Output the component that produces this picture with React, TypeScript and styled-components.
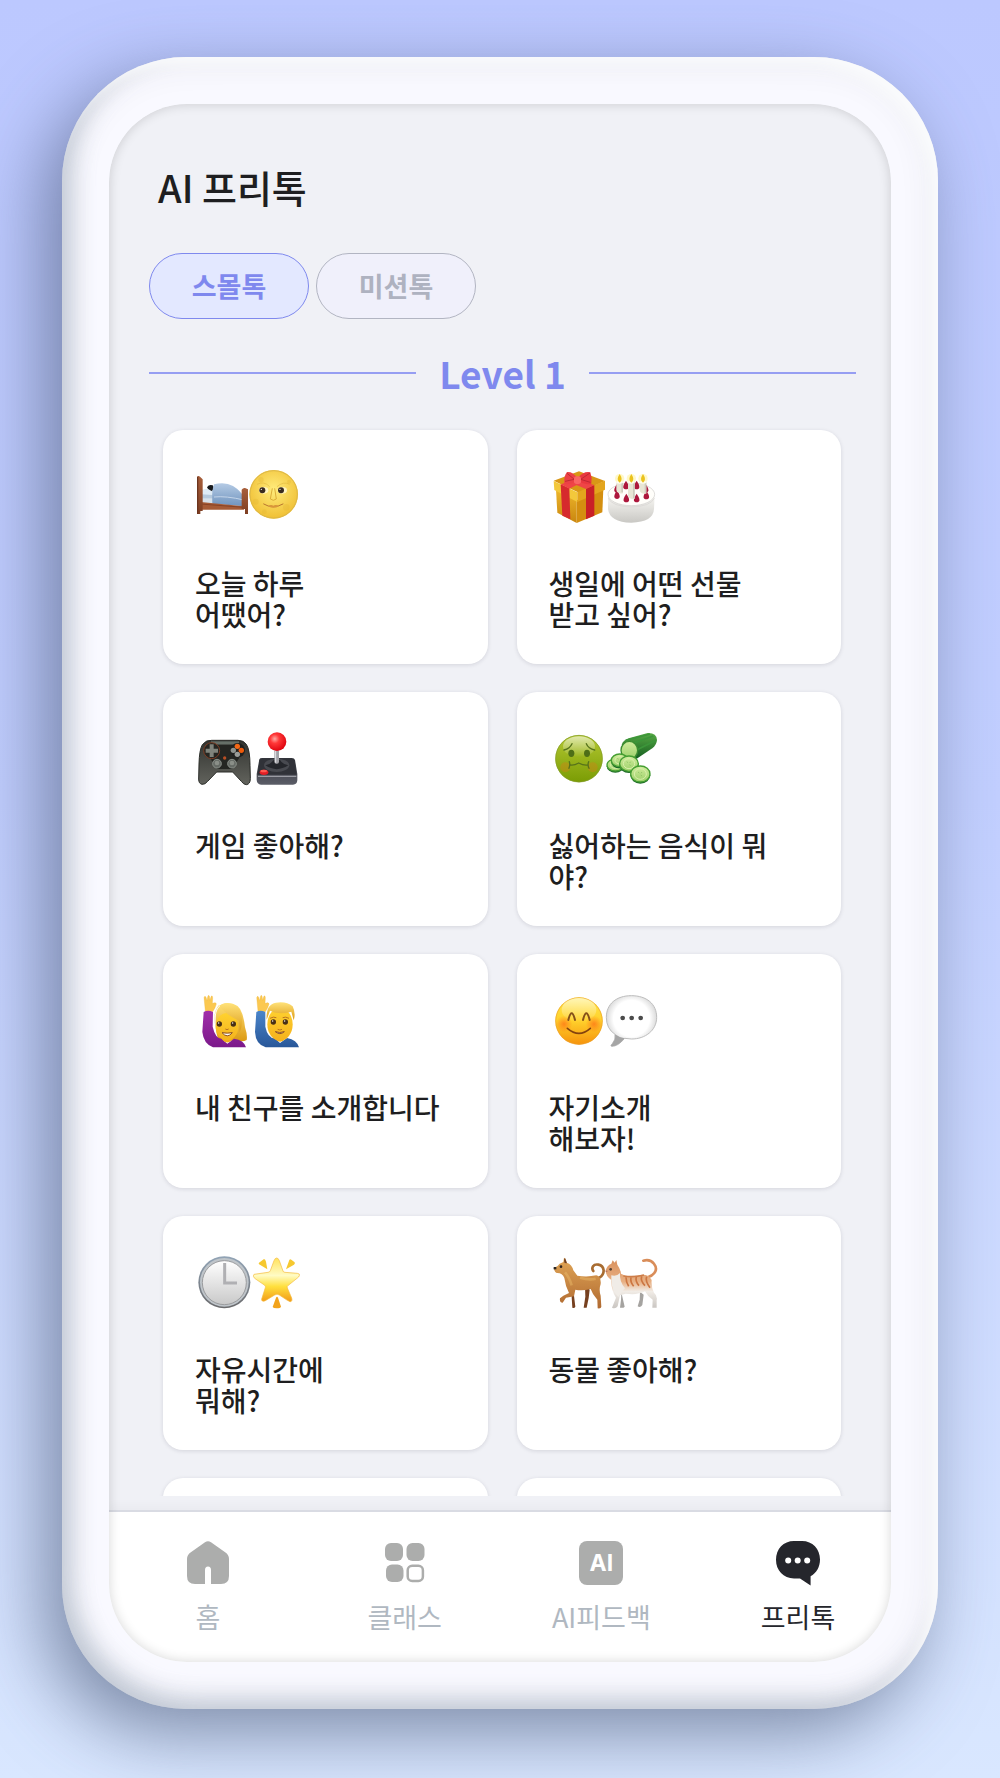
import React, { useState } from "react";
import type { ReactNode } from "react";
import styled, { createGlobalStyle } from "styled-components";

const GlobalStyle = createGlobalStyle`
  *, *::before, *::after { box-sizing: border-box; }
  body {
    margin: 0;
    font-family: "Noto Sans CJK KR", "Noto Sans", sans-serif;
    color: #1e1e20;
  }
  button { font-family: inherit; cursor: pointer; }
`;

const Page = styled.div`
  display: flex;
  height: 100vh;
  padding: 57px 62px 69px;
  background: linear-gradient(180deg, #bcc8ff 0%, #c2cfff 45%, #d9e7ff 100%);
  overflow: hidden;
`;

const Phone = styled.div`
  display: flex;
  flex: 1;
  min-width: 0;
  padding: 47px;
  border-radius: 124px;
  background: #f9f9ff;
  box-shadow:
    inset -10px 10px 12px #f9fafc,
    inset 10px -10px 22px rgba(150, 165, 182, 0.48),
    inset 0 0 36px rgba(60, 65, 80, 0.13),
    -18px 24px 72px rgba(70, 84, 115, 0.62);
`;

const Screen = styled.div`
  position: relative;
  display: flex;
  flex: 1;
  flex-direction: column;
  min-width: 0;
  border-radius: 78px;
  background: #f0f1f6;
  overflow: hidden;

  &::after {
    content: "";
    position: absolute;
    inset: 0;
    border-radius: inherit;
    box-shadow: inset 0 0 12px rgba(0, 0, 0, 0.16);
    pointer-events: none;
  }
`;

const Main = styled.main`
  display: flex;
  flex: 1;
  flex-direction: column;
  min-height: 0;
  padding: 59px 35px 14px 40px;
`;

const Title = styled.h1`
  margin: 0 0 42px;
  padding-left: 9px;
  font-size: 38px;
  font-weight: 500;
  line-height: 48px;
`;

const Tabs = styled.div`
  display: flex;
  gap: 7px;
`;

const Tab = styled.button<{ $active: boolean }>`
  width: 160px;
  height: 66px;
  padding: 0;
  border: 1px solid ${(p) => (p.$active ? "#7f89ee" : "#b2b5c2")};
  border-radius: 33px;
  background: ${(p) => (p.$active ? "#e3e8ff" : "#f0f0fb")};
  color: ${(p) => (p.$active ? "#7f88ee" : "#aeb2c0")};
  font-size: 27px;
  font-weight: 700;
  line-height: 32px;
`;

const LevelHeading = styled.h2`
  display: flex;
  align-items: center;
  gap: 23px;
  margin: 32px 0 0;
  color: #7f89ee;
  font-size: 37px;
  font-weight: 700;
  line-height: 44px;

  &::before,
  &::after {
    content: "";
    flex: 1;
    height: 2px;
    background: #969ef2;
  }
`;

const TopicGrid = styled.div`
  display: grid;
  flex: 1;
  grid-template-columns: 1fr 1fr;
  grid-auto-rows: 234px;
  align-content: start;
  gap: 28px 29px;
  min-height: 0;
  padding: 35px 15px 0 14px;
  overflow: hidden;
`;

const Card = styled.button`
  display: flex;
  flex-direction: column;
  align-items: flex-start;
  gap: 46px;
  padding: 40px 32px 0;
  border: 0;
  border-radius: 20px;
  background: #fff;
  box-shadow: 0 1px 4px rgba(20, 20, 50, 0.13);
  color: inherit;
  text-align: left;
`;

const CardText = styled.span`
  font-size: 28px;
  font-weight: 500;
  line-height: 31px;
  white-space: pre-line;
`;

const Picture = styled.svg`
  display: block;
  width: 104px;
  height: 52px;
  margin-left: 3px;
  overflow: visible;
`;

const BottomNav = styled.nav`
  display: flex;
  justify-content: space-between;
  height: 152px;
  padding: 29px 43px 0 49px;
  border-top: 2px solid #d9dbe3;
  background: #fff;
  box-shadow: 0 -6px 8px rgba(20, 20, 40, 0.025);
`;

const NavLink = styled.a<{ $active?: boolean }>`
  display: flex;
  flex-direction: column;
  align-items: center;
  gap: 16px;
  width: 100px;
  color: ${(p) => (p.$active ? "#25262c" : "#b0b8c1")};
  font-size: 27px;
  line-height: 32px;
  white-space: nowrap;
  text-decoration: none;
`;

const NavIcon = styled.svg`
  display: block;
  width: 44px;
  height: 44px;
  overflow: visible;
`;

const AiBadge = styled.span`
  width: 44px;
  height: 44px;
  border-radius: 8px;
  background: #acadac;
  color: #fff;
  font-family: Inter, sans-serif;
  font-size: 23px;
  font-weight: 700;
  line-height: 44px;
  text-align: center;
`;

function Shade({ id, from, to, radial }: { id: string; from: string; to: string; radial?: boolean }) {
  const stops = (
    <>
      <stop offset="0" stopColor={from} />
      <stop offset="1" stopColor={to} />
    </>
  );
  return radial ? (
    <radialGradient id={id} cx="50%" cy="40%" r="60%">{stops}</radialGradient>
  ) : (
    <linearGradient id={id} x1="0" y1="0" x2="0" y2="1">{stops}</linearGradient>
  );
}

const Gloss = ({ id }: { id: string }) => (
  <linearGradient id={id} x1="0" y1="0" x2="0" y2="1">
    <stop offset="0" stopColor="#fff" stopOpacity="0.6" />
    <stop offset="1" stopColor="#fff" stopOpacity="0" />
  </linearGradient>
);

const BedAndMoon = () => (
  <Picture viewBox="147 147 312 156" aria-hidden="true">
    <defs>
      <Shade id="quilt" from="#b5cbe5" to="#6f93bd" />
      <Shade id="wood" from="#a85f3b" to="#7d3e22" />
      <Shade id="moon" from="#ffec7c" to="#f0bf33" radial />
    </defs>
    <path d="M155 210 L178 203 L200 212 V250 H155Z" fill="#b6c9dc" />
    <path d="M155 232 H200 V252 H155Z" fill="#d7e1ea" />
    <path d="M174 199 Q180 189 191 193 L197 204 L184 212Q178 208 174 199Z" fill="#17191c" />
    <path d="M156 207 L176 203 L194 214 L190 222 L157 220Z" fill="#dfebf5" />
    <path d="M190 248 Q188 205 195 190 Q228 181 252 195 Q276 210 286 230 L286 256Z" fill="url(#quilt)" />
    <path d="M195 228 Q230 224 285 237" fill="none" stroke="#c4d5e9" strokeWidth="3" />
    <path d="M155 243 L285 256 V266 H155Z" fill="#a65b36" />
    <path d="M155 249 L285 259" stroke="#78371d" strokeWidth="2" />
    <path d="M144 168 Q148 163 153 167 L161 175 V270 H154 V279 H144Z" fill="url(#wood)" />
    <path d="M144 168 V279 H148 V166Z" fill="#6c351e" />
    <path d="M278 206 Q282 200 288 201 L297 205 V279 H288 V264 H278Z" fill="url(#wood)" />
    <circle cx="374" cy="220" r="73" fill="url(#moon)" />
    <circle cx="374" cy="220" r="71" fill="none" stroke="#dcb747" strokeWidth="3" />
    <g fill="#e2b432" opacity="0.3">
      <circle cx="336" cy="176" r="8" />
      <circle cx="320" cy="242" r="9" />
      <circle cx="412" cy="259" r="10" />
      <circle cx="420" cy="182" r="6" />
      <circle cx="346" cy="272" r="7" />
    </g>
    <ellipse cx="344" cy="208" rx="14" ry="10" fill="#fff4bf" />
    <ellipse cx="400" cy="208" rx="14" ry="10" fill="#fff4bf" />
    <circle cx="340" cy="208" r="9" fill="#392b20" />
    <circle cx="396" cy="208" r="9" fill="#392b20" />
    <circle cx="337" cy="205" r="2" fill="#fff" />
    <circle cx="393" cy="205" r="2" fill="#fff" />
    <path d="M324 190 Q345 179 362 197 M384 197 Q403 180 422 190" fill="none" stroke="#e3b93f" strokeWidth="2" />
    <path d="M370 202 L364 234 Q373 242 382 234 L377 202" fill="none" stroke="#dcae39" strokeWidth="3" />
    <path d="M344 249 Q372 266 402 249" fill="none" stroke="#b87630" strokeWidth="3" strokeLinecap="round" />
    <path d="M358 256 Q365 249 373 254 Q381 249 389 256 Q374 265 358 256" fill="#d9963a" />
  </Picture>
);

const GiftAndCake = () => (
  <Picture viewBox="126 147 312 156" aria-hidden="true">
    <defs>
      <Shade id="cake" from="#fbfaf6" to="#c9c8c4" />
      <Shade id="giftleft" from="#edb62b" to="#c9860f" />
    </defs>
    <path d="M131 179 L207 151 L285 180 L207 215Z" fill="#d99716" />
    <path d="M138 207 L200 238 V306 L142 275Z" fill="url(#giftleft)" />
    <path d="M200 238 L280 203 L277 274 L200 306Z" fill="#d48f10" />
    <path d="M131 180 L202 214 V243 L133 207Z" fill="#f3c83b" />
    <path d="M202 214 L285 179 V206 L202 243Z" fill="#e3a51d" />
    <path d="M152 190 L178 202 L181 295 L157 284Z" fill="#d62a2d" />
    <path d="M228 203 L253 192 V284 L228 295Z" fill="#c92027" />
    <path d="M152 190 L207 171 L228 178 L178 203Z M178 170 L253 192 L228 204 L170 180Z" fill="#ef4546" />
    <path d="M201 178 Q176 195 163 187 Q161 165 171 153 Q188 151 201 170Z" fill="#ec4146" />
    <path d="M205 170 Q220 150 241 154 Q247 171 244 188 Q224 194 205 180Z" fill="#e9383f" />
    <path d="M171 157 L193 175 L165 181 M240 156 L212 175 L241 184" stroke="#a9202b" fill="none" strokeWidth="2" />
    <rect x="192" y="166" width="21" height="23" rx="8" fill="#fa6665" />
    <path d="M294 220 V264 Q299 304 364 305 Q430 303 432 264 L434 220Z" fill="url(#cake)" />
    <ellipse cx="364" cy="220" rx="70" ry="34" fill="#fffefa" stroke="#d0cecb" strokeWidth="2" />
    <path d="M295 232 Q306 256 364 258 Q422 256 433 232" fill="none" stroke="#dddbd8" strokeWidth="3" />
    {[[321, 203], [348, 193], [380, 193], [407, 203], [321, 222], [349, 232], [380, 232], [409, 223]].map(([x, y]) => (
      <path key={`${x}-${y}`} d={`M${x} ${y - 14} Q${x + 13} ${y + 5} ${x + 6} ${y + 10} Q${x} ${y + 14} ${x - 6} ${y + 10} Q${x - 13} ${y + 5} ${x} ${y - 14}Z`} fill="#ad173c" />
    ))}
    {[[329, 206], [364, 223], [399, 207]].map(([x, y]) => (
      <g key={x}>
        <circle cx={x} cy="173" r="14" fill="#fff3a0" opacity="0.6" />
        <path d={`M${x - 10} 184 V${y} Q${x - 8} ${y + 13} ${x + 10} ${y + 11} V184Z`} fill="#e8e6d5" />
        <path d={`M${x + 5} 183 V${y + 8} H${x + 10} V184Z`} fill="#cccbbd" />
        <ellipse cx={x} cy="184" rx="10" ry="4" fill="#fffdf0" />
        <path d={`M${x} 159 Q${x + 12} 177 ${x} 185 Q${x - 12} 177 ${x} 159`} fill="#eac21d" />
      </g>
    ))}
  </Picture>
);

const PadAndJoystick = () => (
  <Picture viewBox="147 126 312 156" aria-hidden="true">
    <defs>
      <Shade id="pad" from="#31332f" to="#62635d" />
      <Shade id="base" from="#34363c" to="#5b5d67" />
      <radialGradient id="ball" cx="38%" cy="35%" r="70%">
        <stop offset="0" stopColor="#ffaaa3" />
        <stop offset="0.35" stopColor="#ff3838" />
        <stop offset="1" stopColor="#dc000c" />
      </radialGradient>
    </defs>
    <path d="M160 164 Q172 149 188 151 H267 Q284 151 292 163 Q303 180 303 226 L304 265 Q304 283 292 284 Q284 284 277 274 L251 246 H203 L176 274 Q168 284 159 283 Q149 281 149 267 L150 222 Q151 180 160 164Z" fill="url(#pad)" stroke="#292b27" strokeWidth="3" />
    <path d="M186 154 H270 V164 H186Z" fill="#667068" />
    <path d="M198 164 H256 L270 205 L250 237 H204 L185 207Z" fill="#242622" />
    <circle cx="188" cy="182" r="24" fill="#252622" stroke="#7d3d24" strokeWidth="3" />
    <circle cx="266" cy="181" r="22" fill="#20211f" />
    <path d="M182 163 h12 v13 h13 v12 h-13 v13 h-12 v-13 h-12 v-12 h12z" fill="#7f837b" />
    <circle cx="265" cy="169" r="8" fill="#f46816" />
    <circle cx="277" cy="181" r="8" fill="#ee5b0b" />
    <circle cx="253" cy="181" r="8" fill="#8f948f" />
    <circle cx="265" cy="193" r="8" fill="#9b9e9a" />
    <circle cx="204" cy="221" r="13" fill="#666b66" stroke="#8a9089" strokeWidth="3" />
    <circle cx="249" cy="221" r="13" fill="#666b66" stroke="#8a9089" strokeWidth="3" />
    <circle cx="204" cy="219" r="7" fill="#8a8f88" />
    <circle cx="249" cy="219" r="7" fill="#8a8f88" />
    <circle cx="227" cy="204" r="5" fill="#b74e24" />
    <path d="M331 208 Q333 203 342 204 H426 Q436 203 438 210 L445 252 V271 Q444 284 432 284 H336 Q324 283 323 270 V252Z" fill="url(#base)" />
    <path d="M325 254 L332 211 Q333 206 340 206 H428 Q436 206 437 212 L443 254Z" fill="#303238" />
    <path d="M327 259 H442" stroke="#9b9ca3" strokeWidth="4" />
    <ellipse cx="383" cy="226" rx="38" ry="20" fill="#484a50" />
    <path d="M373 211 Q364 224 349 226 Q383 249 418 226 Q399 222 393 210Z" fill="#24262b" />
    <rect x="376" y="178" width="14" height="43" rx="6" fill="#a2a2a7" />
    <path d="M380 182 V218" stroke="#e7e7ea" strokeWidth="3" />
    <circle cx="384" cy="155" r="28" fill="url(#ball)" />
    <ellipse cx="345" cy="247" rx="13" ry="8" fill="#e41f25" />
    <ellipse cx="344" cy="243" rx="10" ry="4" fill="#ff5a50" />
  </Picture>
);

const SickAndCucumber = () => (
  <Picture viewBox="126 126 312 156" aria-hidden="true">
    <defs>
      <Shade id="sick" from="#b4c832" to="#7a9c04" />
      <Gloss id="sickgloss" />
      <Shade id="peel" from="#57a944" to="#155f20" />
      <Shade id="flesh" from="#d2ec9d" to="#9bd069" />
    </defs>
    <circle cx="207" cy="206" r="71" fill="url(#sick)" />
    <circle cx="207" cy="206" r="70" fill="none" stroke="#849c2c" strokeWidth="2" />
    <ellipse cx="207" cy="170" rx="48" ry="31" fill="url(#sickgloss)" />
    <circle cx="166" cy="232" r="15" fill="#cc8617" opacity="0.45" />
    <circle cx="248" cy="232" r="15" fill="#cc8617" opacity="0.45" />
    <ellipse cx="184" cy="190" rx="9" ry="11" fill="#4e6e17" />
    <ellipse cx="231" cy="190" rx="9" ry="11" fill="#4e6e17" />
    <path d="M162 180 Q180 175 186 161 M229 161 Q235 176 254 180 M178 215 Q181 224 177 235 M181 225 Q192 227 206 219 Q221 227 233 225 M236 215 Q232 224 237 235" fill="none" stroke="#57731b" strokeWidth="4" strokeLinecap="round" />
    <path d="M335 164 Q340 151 356 145 L413 129 Q440 128 441 150 Q440 164 428 174 L379 207Z" fill="url(#peel)" />
    <path d="M347 151 L420 132 M369 160 L430 138 M380 180 L438 151" stroke="#3c963a" strokeWidth="5" />
    <ellipse cx="358" cy="181" rx="25" ry="27" fill="url(#flesh)" stroke="#3b8c30" strokeWidth="4" />
    {[[316, 225, 26, 19], [329, 211, 26, 20], [357, 221, 29, 24], [391, 252, 30, 25]].map(([x, y, rx, ry]) => (
      <g key={x}>
        <ellipse cx={x} cy={y + 4} rx={rx} ry={ry} fill="#1e6b28" />
        <ellipse cx={x} cy={y} rx={rx - 1} ry={ry - 1} fill="url(#flesh)" stroke="#459e32" strokeWidth="4" />
        <ellipse cx={x} cy={y} rx={rx - 12} ry={ry - 9} fill="none" stroke="#d9efaa" strokeWidth="3" />
        <path d={`M${x - 7} ${y - 6} l4 3 M${x + 5} ${y - 6} l-3 4 M${x + 5} ${y + 6} l-4 -3`} stroke="#82b75c" strokeWidth="2" />
      </g>
    ))}
  </Picture>
);

const Hand = ({ x }: { x: number }) => (
  <g transform={`translate(${x} 0)`} fill="#fbc850" stroke="#edb23a" strokeWidth="1">
    <path d="M169 184 L166 152 Q164 139 168 139 Q171 139 174 152 L176 141 Q178 133 181 138 L183 151 L186 140 Q190 134 191 143 L190 160 Q202 155 202 162 Q199 174 191 185Z" />
  </g>
);

const WavingFriends = () => (
  <Picture viewBox="147 132 312 156" aria-hidden="true">
    <defs>
      <Shade id="purple" from="#a12faa" to="#7b198a" />
      <Shade id="blue" from="#4b85ca" to="#285799" />
      <Shade id="skin" from="#ffd230" to="#f5b21c" />
      <Shade id="hair" from="#ffe27a" to="#dc9a12" />
    </defs>
    <Hand x={0} />
    <path d="M200 207 Q200 163 234 159 Q270 158 280 192 Q286 212 288 232 Q296 256 293 270 Q283 276 263 272 H210 Q198 249 200 207Z" fill="url(#hair)" />
    <path d="M164 186 Q177 178 192 186 L191 230 Q199 265 217 266 L235 281 L255 266 Q285 270 291 292 H192 Q164 282 160 246Z" fill="url(#purple)" />
    <path d="M220 254 H250 V268 Q236 286 220 269Z" fill="#f0a91d" />
    <ellipse cx="234" cy="230" rx="34" ry="41" fill="url(#skin)" />
    <path d="M197 222 Q193 182 210 165 Q226 192 270 212 L272 247 Q284 222 276 188 Q266 160 232 159 Q200 162 197 202Z" fill="url(#hair)" />
    <Hand x={158} />
    <path d="M322 186 Q334 178 349 186 L349 230 Q356 264 377 265 L393 279 L414 264 Q444 270 450 292 H350 Q320 283 318 246Z" fill="url(#blue)" />
    <path d="M378 253 H408 V266 Q394 285 378 266Z" fill="#eda91d" />
    <ellipse cx="393" cy="223" rx="38" ry="49" fill="url(#skin)" />
    <path d="M353 209 Q350 163 381 158 Q412 153 431 169 Q441 190 434 211 L427 185 Q390 196 363 182Z" fill="url(#hair)" />
    <g fill="#493016">
      <circle cx="211" cy="222" r="8" />
      <circle cx="253" cy="222" r="8" />
      <circle cx="373" cy="216" r="8" />
      <circle cx="409" cy="216" r="8" />
    </g>
    <g fill="#fff">
      <circle cx="209" cy="219" r="2" />
      <circle cx="251" cy="219" r="2" />
      <circle cx="371" cy="213" r="2" />
      <circle cx="407" cy="213" r="2" />
    </g>
    <path d="M219 248 Q234 251 250 248 Q235 267 219 248Z M379 245 Q392 250 406 245 Q393 257 379 245Z" fill="#fff" stroke="#8c5022" strokeWidth="3" />
    <path d="M229 237 Q234 241 239 237 M386 238 Q393 242 399 238 M363 205 Q373 199 382 203 M401 203 Q410 199 420 205" fill="none" stroke="#b97420" strokeWidth="3" />
  </Picture>
);

const SmileAndSpeech = () => (
  <Picture viewBox="126 132 312 156" aria-hidden="true">
    <defs>
      <linearGradient id="smile" x1="0" y1="0" x2="0" y2="1">
        <stop offset="0" stopColor="#ffe84a" />
        <stop offset="0.5" stopColor="#ffd02b" />
        <stop offset="1" stopColor="#f6930c" />
      </linearGradient>
      <Gloss id="smilegloss" />
      <radialGradient id="blush">
        <stop offset="0" stopColor="#ff6a14" stopOpacity="0.7" />
        <stop offset="1" stopColor="#ff6a14" stopOpacity="0" />
      </radialGradient>
      <radialGradient id="speech" cx="50%" cy="45%" r="55%">
        <stop offset="0.65" stopColor="#fff" />
        <stop offset="1" stopColor="#cfcfcf" />
      </radialGradient>
    </defs>
    <circle cx="207" cy="213" r="71" fill="url(#smile)" />
    <circle cx="207" cy="213" r="70" fill="none" stroke="#eba02c" strokeWidth="2" />
    <ellipse cx="207" cy="180" rx="52" ry="36" fill="url(#smilegloss)" />
    <circle cx="162" cy="222" r="25" fill="url(#blush)" />
    <circle cx="252" cy="222" r="25" fill="url(#blush)" />
    <path d="M175 210 Q185 170 195 210 M219 210 Q229 170 239 210" fill="none" stroke="#855019" strokeWidth="6" strokeLinecap="round" />
    <path d="M172 235 Q207 265 241 235" fill="none" stroke="#84420e" strokeWidth="5" strokeLinecap="round" />
    <path d="M364 137 C410 137 440 162 440 202 C440 242 405 267 365 267 L344 265 Q323 290 305 289 Q300 288 307 281 Q318 269 315 253 Q289 236 289 202 C289 162 319 137 364 137Z" fill="url(#speech)" stroke="#bdbdbd" strokeWidth="3" />
    <path d="M315 253 Q329 263 344 265 Q323 290 305 289 Q300 288 307 281 Q318 269 315 253Z" fill="#a5a5a5" />
    <circle cx="338" cy="204" r="7" fill="#4b4b4b" />
    <circle cx="365" cy="204" r="7" fill="#4b4b4b" />
    <circle cx="392" cy="204" r="7" fill="#4b4b4b" />
  </Picture>
);

const ClockAndStar = () => (
  <Picture viewBox="147 141 312 156" aria-hidden="true">
    <defs>
      <Shade id="rim" from="#92a4b6" to="#69696b" />
      <Shade id="dial" from="#ffffff" to="#c9c9c9" />
      <linearGradient id="star" x1="0" y1="0" x2="0" y2="1">
        <stop offset="0" stopColor="#ffe25c" />
        <stop offset="0.4" stopColor="#fffbc4" />
        <stop offset="0.65" stopColor="#ffe03e" />
        <stop offset="1" stopColor="#f29a17" />
      </linearGradient>
    </defs>
    <circle cx="226" cy="220" r="78" fill="url(#rim)" />
    <circle cx="226" cy="220" r="73" fill="#bfc5ca" />
    <circle cx="226" cy="221" r="66" fill="url(#dial)" stroke="#9b9c9e" strokeWidth="3" />
    <path d="M227 162 V222 H264" fill="none" stroke="#b0b0b3" strokeWidth="9" />
    <path d="M383 147 Q388 147 391 155 L402 186 Q403 190 408 190 L445 193 Q454 194 451 200 Q450 204 444 208 L418 229 Q413 232 415 237 L428 267 Q431 279 423 278 L415 274 L391 258 Q384 253 377 258 L349 275 Q337 280 338 270 L349 236 Q351 231 346 228 L317 208 Q310 201 315 196 L357 190 Q362 190 364 185 L375 155 Q378 147 383 147Z" fill="url(#star)" stroke="#f5b93d" strokeWidth="2" />
    <path d="M329 165 Q329 161 333 159 L345 150 Q349 151 351 158 L355 181Z M411 181 L421 153 Q423 149 427 152 L437 160 Q439 164 435 167Z" fill="#f6c82f" />
    <path d="M371 294 L381 266 Q384 261 387 266 L396 293 Q394 298 383 298 Q373 298 371 294Z" fill="#f2a31b" />
  </Picture>
);

const DogAndCat = () => (
  <Picture viewBox="126 141 312 156" aria-hidden="true">
    <defs>
      <Shade id="dog" from="#e0a556" to="#b06a31" />
      <linearGradient id="cat" x1="0" y1="0" x2="0" y2="1">
        <stop offset="0" stopColor="#d9915e" />
        <stop offset="0.45" stopColor="#e8b083" />
        <stop offset="0.65" stopColor="#f1ece6" />
        <stop offset="1" stopColor="#c9c5c1" />
      </linearGradient>
    </defs>
    <path d="M268 206 C287 194 284 171 265 167 C250 164 243 177 250 186" fill="none" stroke="#a86c31" strokeWidth="8" strokeLinecap="round" />
    <path d="M225 230 L239 242 L236 267 L230 296 H221 L226 263Z M190 244 L196 293 Q193 299 187 296 L184 248Z" fill="#76401f" />
    <path d="M131 178 Q144 172 149 164 L160 159 L162 146 Q168 148 170 161 Q186 166 190 184 L202 200 Q231 205 259 199 Q274 202 272 225 Q266 242 272 260 L274 293 Q273 300 263 298 L262 272 Q247 256 242 240 Q216 247 196 242 L192 262 L168 266 L158 281 Q148 281 150 268 L160 260 L177 252 Q166 230 163 207 Q157 191 140 192 Q134 190 131 178Z" fill="url(#dog)" />
    <path d="M164 162 Q160 151 165 147 L171 163" fill="#6d3e23" />
    <path d="M131 174 h8 v7 h-8z" fill="#292522" />
    <circle cx="153" cy="173" r="4" fill="#32251d" />
    <path d="M165 190 Q178 205 185 229 M210 206 Q238 214 257 209" fill="none" stroke="#f0c270" strokeWidth="8" opacity="0.4" />
    <path d="M400 155 C428 147 446 175 433 192 Q426 201 415 204" fill="none" stroke="#d98d59" strokeWidth="8" strokeLinecap="round" />
    <path d="M390 248 L401 257 L397 288 Q391 297 383 292 L389 272Z M334 250 L344 293 Q340 298 330 296 L333 272Z" fill="#a5a3a0" />
    <path d="M287 184 Q291 169 304 164 L308 154 L314 161 L319 153 L322 167 Q332 181 333 194 Q351 206 386 199 Q414 192 425 213 Q423 233 432 251 Q443 260 440 274 V296 H427 L428 272 Q413 263 405 247 Q382 259 347 254 L330 259 L323 292 Q316 301 306 296 L318 266 Q303 244 304 213 Q287 202 287 184Z" fill="url(#cat)" />
    <path d="M304 199 Q319 204 330 192 Q328 218 345 238 Q334 248 325 264 Q304 244 304 213Z" fill="#f0ece7" />
    <path d="M348 205 Q348 220 356 232 M363 205 Q360 218 371 232 M379 203 Q375 216 387 230 M395 202 Q391 216 405 230 M410 203 Q405 216 420 236" fill="none" stroke="#cc7641" strokeWidth="5" />
    <path d="M340 201 Q372 206 402 198" fill="none" stroke="#cd7d49" strokeWidth="5" />
    <circle cx="302" cy="181" r="4" fill="#574133" />
    <path d="M287 187 h5" stroke="#b3715e" strokeWidth="4" />
  </Picture>
);

interface Topic {
  text: string;
  picture: ReactNode;
}

const topics: Topic[] = [
  { text: "오늘 하루\n어땠어?", picture: <BedAndMoon /> },
  { text: "생일에 어떤 선물\n받고 싶어?", picture: <GiftAndCake /> },
  { text: "게임 좋아해?", picture: <PadAndJoystick /> },
  { text: "싫어하는 음식이 뭐\n야?", picture: <SickAndCucumber /> },
  { text: "내 친구를 소개합니다", picture: <WavingFriends /> },
  { text: "자기소개\n해보자!", picture: <SmileAndSpeech /> },
  { text: "자유시간에\n뭐해?", picture: <ClockAndStar /> },
  { text: "동물 좋아해?", picture: <DogAndCat /> },
];

const tabs = ["스몰톡", "미션톡"];

export default function App() {
  const [tab, setTab] = useState(tabs[0]);

  return (
    <>
      <GlobalStyle />
      <Page>
        <Phone>
          <Screen>
            <Main>
              <Title>AI 프리톡</Title>
              <Tabs>
                {tabs.map((name) => (
                  <Tab key={name} type="button" $active={tab === name} aria-pressed={tab === name} onClick={() => setTab(name)}>
                    {name}
                  </Tab>
                ))}
              </Tabs>
              <LevelHeading>Level 1</LevelHeading>
              <TopicGrid>
                {topics.map((topic) => (
                  <Card key={topic.text} type="button">
                    {topic.picture}
                    <CardText>{topic.text}</CardText>
                  </Card>
                ))}
                <Card as="div" />
                <Card as="div" />
              </TopicGrid>
            </Main>
            <BottomNav>
              <NavLink href="#home">
                <NavIcon viewBox="-1 0 44 44" fill="#acadac" aria-hidden="true">
                  <path d="M18 1.200Q21 -.8 24 1.200L38.500 11.500Q42 14 42 18V35Q42 43 34 43H24V29Q24 25.500 21 25.500Q18 25.500 18 29V43H8Q0 43 0 35V18Q0 14 3.500 11.500Z" />
                </NavIcon>
                홈
              </NavLink>
              <NavLink href="#class">
                <NavIcon viewBox="-2 -2 44 44" fill="#acadac" aria-hidden="true">
                  <rect width="18" height="18" rx="6" />
                  <rect x="21.500" width="18" height="18" rx="6" />
                  <rect x="1" y="21.500" width="17.500" height="17.500" rx="6" />
                  <rect x="22.700" y="22.700" width="15.200" height="15.200" rx="4.500" fill="none" stroke="#acadac" strokeWidth="2.500" />
                </NavIcon>
                클래스
              </NavLink>
              <NavLink href="#feedback">
                <AiBadge>AI</AiBadge>
                AI피드백
              </NavLink>
              <NavLink href="#freetalk" $active aria-current="page">
                <NavIcon viewBox="0 0 44 44" aria-hidden="true">
                  <path d="M18 0H26C36.500 0 44 8 44 18.500C44 26 40.500 32 34.600 35.300V44.500L24 37.500H18C7.500 37.500 0 29.500 0 18.800C0 8 7.500 0 18 0Z" fill="#25262c" />
                  <circle cx="12.200" cy="19.500" r="3" fill="#fff" />
                  <circle cx="21.700" cy="19.500" r="3" fill="#fff" />
                  <circle cx="31.200" cy="19.500" r="3" fill="#fff" />
                </NavIcon>
                프리톡
              </NavLink>
            </BottomNav>
          </Screen>
        </Phone>
      </Page>
    </>
  );
}
